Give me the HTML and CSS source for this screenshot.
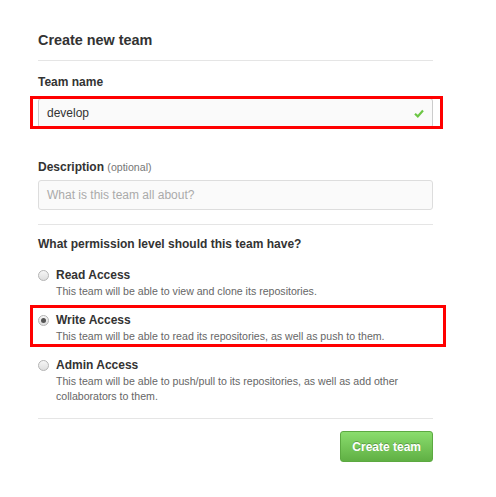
FILE: index.html
```html
<!DOCTYPE html>
<html>
<head>
<meta charset="utf-8">
<link rel="stylesheet" href="styles.css">
</head>
<body>
<div class="page">
  <h2 class="title">Create new team</h2>
  <div class="field first">
    <label class="label">Team name</label>
    <div class="mark-wrap">
      <div class="input filled">
        <span>develop</span>
        <svg class="check" width="10" height="9" viewBox="0 0 10 9"><path d="M1 4.8 L3.8 7.4 L9 1.6" fill="none" stroke="#6cc644" stroke-width="2.2"/></svg>
      </div>
      <div class="annot annot-input"></div>
    </div>
  </div>
  <div class="field desc">
    <label class="label desc-label">Description <span class="opt">(optional)</span></label>
    <div class="input placeholder">What is this team all about?</div>
  </div>
  <div class="perm">
    <h3 class="perm-title">What permission level should this team have?</h3>
    <div class="option">
      <span class="radio"></span>
      <div class="opt-text">
        <div class="opt-name">Read Access</div>
        <div class="opt-note">This team will be able to view and clone its repositories.</div>
      </div>
    </div>
    <div class="option mark-wrap">
      <span class="radio checked"></span>
      <div class="opt-text">
        <div class="opt-name">Write Access</div>
        <div class="opt-note">This team will be able to read its repositories, as well as push to them.</div>
      </div>
      <div class="annot annot-option"></div>
    </div>
    <div class="option last">
      <span class="radio"></span>
      <div class="opt-text">
        <div class="opt-name">Admin Access</div>
        <div class="opt-note">This team will be able to push/pull to its repositories, as well as add other<br>collaborators to them.</div>
      </div>
    </div>
  </div>
  <div class="actions">
    <button class="btn">Create team</button>
  </div>
</div>
</body>
</html>
```
FILE: styles.css
```css
html, body {
  margin: 0;
  padding: 0;
  background: #fff;
}
body {
  font-family: "Liberation Sans", Arial, sans-serif;
  color: #333;
}
.page {
  width: 395px;
  margin-left: 38px;
  padding-top: 31px;
}
.title {
  margin: 0;
  font-size: 14.4px;
  font-weight: bold;
  line-height: 18px;
  padding-bottom: 11px;
  border-bottom: 1px solid #e5e5e5;
}
.field.first {
  margin-top: 13px;
}
.label {
  display: block;
  font-size: 12px;
  font-weight: bold;
  line-height: 16px;
  margin-bottom: 8px;
}
.desc-label {
  margin-bottom: 5px;
}
.opt {
  font-weight: normal;
  font-size: 10.6px;
  color: #777;
}
.mark-wrap {
  position: relative;
}
.input {
  box-sizing: border-box;
  height: 30px;
  border: 1px solid #ddd;
  border-radius: 3px;
  background: #fafafa;
  font-size: 12px;
  line-height: 28px;
  padding: 0 8px;
  display: flex;
  align-items: center;
  justify-content: space-between;
}
.input.filled {
  border-color: #ccc;
  color: #333;
}
.placeholder {
  color: #aaa;
}
.annot {
  position: absolute;
  border: 3px solid #ff0000;
  pointer-events: none;
}
.annot-input {
  left: -8px;
  right: -10px;
  top: -2px;
  bottom: -1px;
}
.desc {
  margin-top: 31px;
}
.perm {
  margin-top: 14px;
  border-top: 1px solid #e5e5e5;
  padding-top: 11px;
}
.perm-title {
  margin: 0 0 15px;
  font-size: 12px;
  font-weight: bold;
  line-height: 16px;
}
.option {
  display: flex;
  align-items: flex-start;
  margin-bottom: 13px;
}
.option.last {
  margin-bottom: 14px;
}
.radio {
  box-sizing: border-box;
  width: 11px;
  height: 11px;
  border-radius: 50%;
  border: 1px solid #b4b4b4;
  background: linear-gradient(#f6f6f6, #dedede);
  margin: 3px 7px 0 0;
  flex: none;
  position: relative;
}
.radio.checked::after {
  content: "";
  position: absolute;
  left: 2px;
  top: 2px;
  width: 5px;
  height: 5px;
  border-radius: 50%;
  background: #555;
}
.opt-name {
  font-size: 12px;
  font-weight: bold;
  line-height: 17px;
}
.opt-note {
  font-size: 10.6px;
  color: #666;
  line-height: 15px;
}
.annot-option {
  left: -8px;
  right: -13px;
  top: -7px;
  bottom: -3px;
}
.actions {
  border-top: 1px solid #e5e5e5;
  padding-top: 12px;
  display: flex;
  justify-content: flex-end;
}
.btn {
  font-family: "Liberation Sans", Arial, sans-serif;
  font-size: 12px;
  font-weight: bold;
  color: #fff;
  text-shadow: 0 -1px 0 rgba(0,0,0,0.25);
  height: 31px;
  padding: 0 11px;
  border: 1px solid #5ca941;
  border-radius: 3px;
  background: linear-gradient(#8add6d, #60b044);
}
```
